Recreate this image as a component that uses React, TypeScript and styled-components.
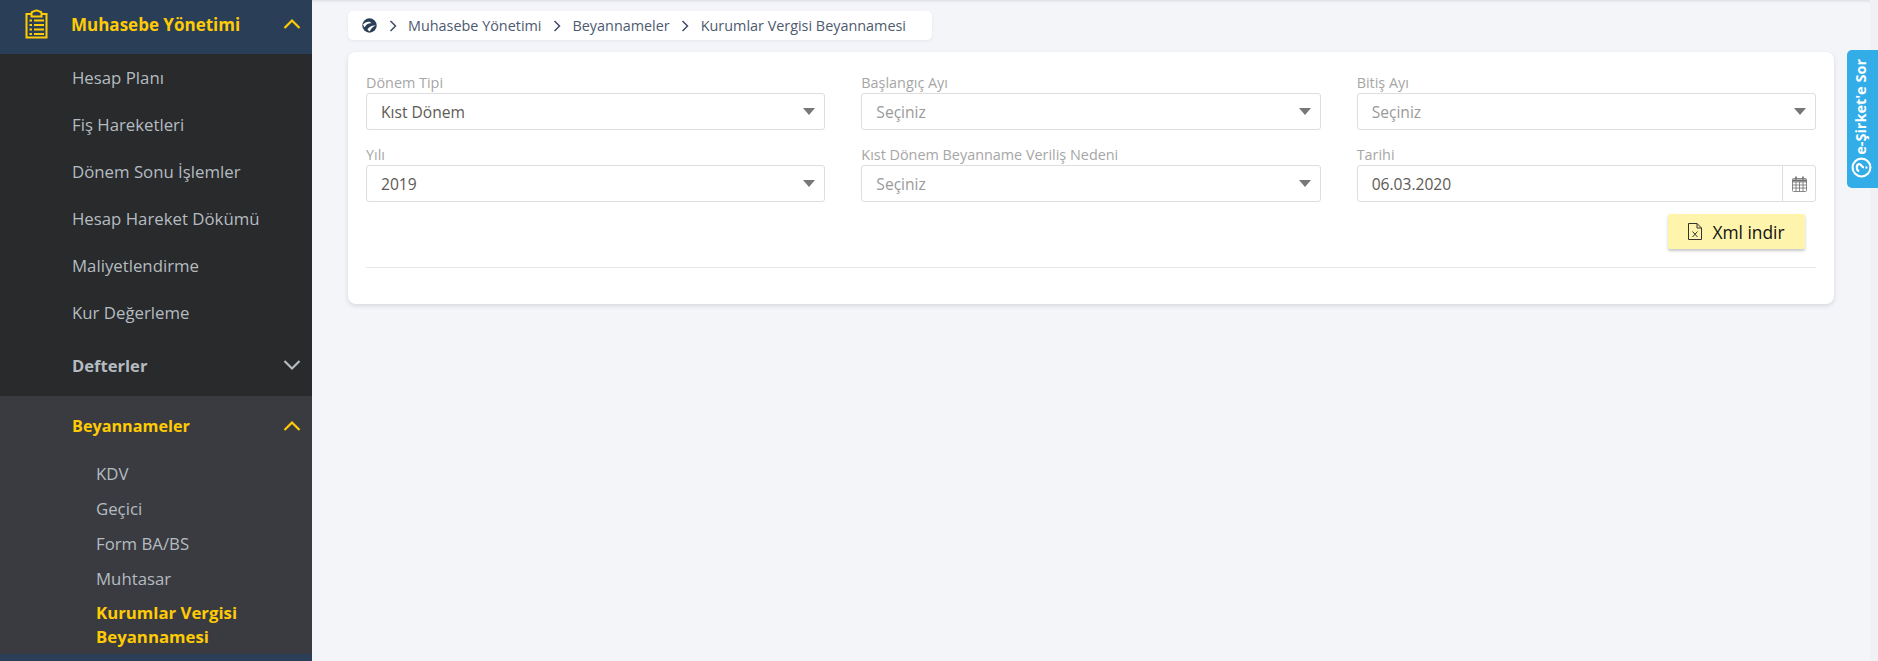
import styled, { createGlobalStyle } from 'styled-components'

const GlobalStyle = createGlobalStyle`
  html, body {
    margin: 0;
    height: 100%;
    overflow: hidden;
    background: #f3f5f9;
    font-family: 'Open Sans', 'Noto Sans', sans-serif;
  }
  * {
    box-sizing: border-box;
  }
`

const Page = styled.div`
  position: relative;
  display: flex;
  height: 661px;
  overflow: hidden;
`

const Sidebar = styled.nav`
  flex: 0 0 312px;
  display: flex;
  flex-direction: column;
  height: 661px;
  background: #292a2c;
`

const ActiveHeader = styled.div`
  flex: 0 0 54px;
  display: flex;
  align-items: center;
  justify-content: space-between;
  padding: 0 11px 6px 25px;
  background: #2a3f57;
`

const HeaderTitle = styled.div`
  display: flex;
  align-items: center;
  gap: 23px;
  font-size: 17px;
  font-weight: 700;
  color: #ffcb05;
`

const SubMenu = styled.div``

const MenuItem = styled.div`
  display: flex;
  align-items: center;
  height: 47px;
  padding-left: 72px;
  font-size: 16.8px;
  color: #b4bcc1;
`

const ClosedGroup = styled.div`
  flex: 0 0 60px;
  display: flex;
  align-items: center;
  justify-content: space-between;
  padding: 0 11px 2px 72px;
  font-size: 16.6px;
  font-weight: 700;
  color: #b4bcc1;
`

const OpenGroup = styled.div`
  flex: 0 0 258px;
  background: #3a3b40;
`

const OpenGroupTitle = styled.div`
  display: flex;
  align-items: center;
  justify-content: space-between;
  height: 60px;
  padding: 0 11px 0 72px;
  font-size: 16.2px;
  font-weight: 700;
  color: #ffcb05;
`

const NestedList = styled.div``

const NestedItem = styled.div<{ $active?: boolean }>`
  margin-top: ${(p) => (p.$active ? '5px' : 0)};
  padding: 0 40px 0 96px;
  font-size: 16.8px;
  line-height: ${(p) => (p.$active ? '24px' : '35px')};
  font-weight: ${(p) => (p.$active ? 700 : 400)};
  color: ${(p) => (p.$active ? '#ffcb05' : '#b4bcc1')};
`

const NavyFoot = styled.div`
  flex: 1;
  background: #2a3f57;
`

const Main = styled.main`
  flex: 1;
  min-width: 0;
  padding: 11px 44px 0 36px;
  box-shadow: inset 0 3px 3px -2px rgba(40, 50, 70, 0.14);
`

const Breadcrumb = styled.div`
  display: flex;
  align-items: center;
  gap: 11.5px;
  width: 584px;
  height: 29px;
  padding-left: 14px;
  background: #fff;
  border-radius: 5px;
  box-shadow: 0 1px 3px rgba(60, 70, 90, 0.08);
  font-size: 14.4px;
  color: #4d5a70;
`

const Crumb = styled.span`
  white-space: nowrap;
`

const Card = styled.section`
  height: 252px;
  margin-top: 12px;
  padding: 22px 18px 0;
  background: #fff;
  border-radius: 8px;
  box-shadow: 0 2px 4px rgba(60, 70, 90, 0.16);
`

const FormGrid = styled.div`
  display: grid;
  grid-template-columns: repeat(3, 1fr);
  column-gap: 36px;
  row-gap: 16px;
`

const Field = styled.div`
  min-width: 0;
`

const FieldLabel = styled.div`
  height: 19px;
  font-size: 14.4px;
  line-height: 18px;
  color: #a6a6a6;
`

const SelectBox = styled.div<{ $placeholder?: boolean }>`
  display: flex;
  align-items: center;
  justify-content: space-between;
  height: 37px;
  padding: 0 9px 0 14px;
  background: #fff;
  border: 1px solid #dedede;
  border-radius: 3px;
  font-size: 15.6px;
  color: ${(p) => (p.$placeholder ? '#9a9a9a' : '#5e5a56')};
`

const Caret = styled.span`
  width: 0;
  height: 0;
  border-left: 6.5px solid transparent;
  border-right: 6.5px solid transparent;
  border-top: 7px solid #777;
`

const DateBox = styled.div`
  display: flex;
  height: 37px;
  background: #fff;
  border: 1px solid #dedede;
  border-radius: 3px;
  font-size: 15.6px;
  color: #5e5a56;
`

const DateValue = styled.div`
  flex: 1;
  display: flex;
  align-items: center;
  padding-left: 14px;
`

const DateAddon = styled.div`
  flex: 0 0 33px;
  display: flex;
  align-items: center;
  justify-content: center;
  border-left: 1px solid #dedede;
`

const Actions = styled.div`
  display: flex;
  justify-content: flex-end;
  margin-top: 12px;
  padding-right: 11px;
`

const XmlButton = styled.button`
  display: flex;
  align-items: center;
  justify-content: center;
  gap: 10px;
  width: 137px;
  height: 35px;
  padding: 0;
  border: 0;
  border-radius: 2px;
  background: #fff4ab;
  box-shadow: 0 2px 3px rgba(0, 0, 0, 0.22);
  font-family: inherit;
  font-size: 17.4px;
  color: #111;
`

const Divider = styled.hr`
  margin: 18px 0 0;
  border: 0;
  border-top: 1px solid #e8e8e4;
`

const HelpTab = styled.div`
  position: absolute;
  top: 50px;
  right: 0;
  display: flex;
  flex-direction: column-reverse;
  align-items: center;
  gap: 2px;
  width: 31px;
  height: 138px;
  padding: 0 3px 10px 0;
  background: #33ade8;
  border-radius: 5px 0 0 5px;
  color: #fff;
`

const HelpText = styled.span`
  writing-mode: vertical-rl;
  transform: rotate(180deg);
  font-size: 14.5px;
  font-weight: 700;
  line-height: 16px;
  white-space: nowrap;
`

const ScrollTrack = styled.div`
  position: absolute;
  top: 0;
  right: 0;
  bottom: 0;
  width: 8px;
  background: #f0f1f3;
`

function Chevron({ up, color }: { up?: boolean; color: string }) {
  return (
    <svg width="18" height="12" viewBox="0 0 18 12" fill="none">
      <path
        d={up ? 'M1.5 10 L9 2.5 L16.5 10' : 'M1.5 2 L9 9.5 L16.5 2'}
        stroke={color}
        strokeWidth="2.2"
      />
    </svg>
  )
}

function CrumbArrow() {
  return (
    <svg width="8" height="12" viewBox="0 0 8 12" fill="none">
      <path d="M1.5 1 L6.5 6 L1.5 11" stroke="#3f4d63" strokeWidth="1.5" />
    </svg>
  )
}

function ClipboardIcon() {
  return (
    <svg width="23" height="30" viewBox="0 0 23 30" fill="none" stroke="#ffcb05" strokeWidth="2">
      <path d="M7 5 H1.5 V28.5 H21.5 V5 H16" />
      <path d="M6.5 7.5 V4.5 C6.5 3 7.5 2.5 8.5 2.5 C9.5 1 13.5 1 14.5 2.5 C15.5 2.5 16.5 3 16.5 4.5 V7.5 Z" />
      <path d="M4.5 11.5 H7 M9 11.5 H19 M4.5 16 H7 M9 16 H19 M4.5 20.5 H7 M9 20.5 H19 M4.5 25 H7 M9 25 H19" />
    </svg>
  )
}

function BrandIcon() {
  return (
    <svg width="15" height="15" viewBox="0 0 15 15">
      <circle cx="7.5" cy="7.5" r="7.2" fill="#2a3f57" />
      <path d="M1 6.5 C4 3 8 3 9.5 5.2 C7 4.8 4 6 2.4 9.6 Z" fill="#fff" />
      <path d="M5.4 11.5 C7.5 8 11 7 13.9 7.6 C11.5 8.4 9.2 10 7.6 13.6 Z" fill="#fff" />
    </svg>
  )
}

function CalendarIcon() {
  return (
    <svg width="15" height="16" viewBox="0 0 15 16" fill="none" stroke="#6c6c6c" strokeWidth="0.8">
      <rect x="0.5" y="2.5" width="14" height="13" rx="1" />
      <path d="M0.5 6 H14.5 M0.5 9 H14.5 M0.5 12 H14.5 M4 6 V15.5 M7.5 6 V15.5 M11 6 V15.5" />
      <path d="M4 0.5 V3.5 M11 0.5 V3.5" strokeWidth="1.6" />
      <path d="M0.5 4.5 H14.5" strokeWidth="2" />
    </svg>
  )
}

function XmlFileIcon() {
  return (
    <svg width="14" height="17" viewBox="0 0 14 17" fill="none" stroke="#333" strokeWidth="1">
      <path d="M0.5 0.5 H9 L13.5 5 V16.5 H0.5 Z" />
      <path d="M9 0.5 V5 H13.5" />
      <path d="M4.5 8.5 L9.5 14 M9.5 8.5 L4.5 14" />
    </svg>
  )
}

// the question mark lies on its side, like the label next to it
function HelpIcon() {
  return (
    <svg width="21" height="21" viewBox="0 0 20 20" fill="none" stroke="#fff">
      <circle cx="10" cy="10" r="8.5" strokeWidth="2" />
      <g transform="rotate(-90 10 10)" strokeWidth="2.1">
        <path d="M6.8 7.8 C6.8 4.8 13.2 4.8 13.2 8 C13.2 10 10 10 10 12.4" />
        <path d="M10 13.8 V15.6" />
      </g>
    </svg>
  )
}

const firstItems = [
  'Hesap Planı',
  'Fiş Hareketleri',
  'Dönem Sonu İşlemler',
  'Hesap Hareket Dökümü',
  'Maliyetlendirme',
  'Kur Değerleme',
]

const nestedItems = ['KDV', 'Geçici', 'Form BA/BS', 'Muhtasar']

export default function App() {
  return (
    <Page>
      <GlobalStyle />
      <Sidebar>
        <ActiveHeader>
          <HeaderTitle>
            <ClipboardIcon />
            Muhasebe Yönetimi
          </HeaderTitle>
          <Chevron up color="#ffcb05" />
        </ActiveHeader>
        <SubMenu>
          {firstItems.map((item) => (
            <MenuItem key={item}>{item}</MenuItem>
          ))}
        </SubMenu>
        <ClosedGroup>
          Defterler
          <Chevron color="#b4bcc1" />
        </ClosedGroup>
        <OpenGroup>
          <OpenGroupTitle>
            Beyannameler
            <Chevron up color="#ffcb05" />
          </OpenGroupTitle>
          <NestedList>
            {nestedItems.map((item) => (
              <NestedItem key={item}>{item}</NestedItem>
            ))}
            <NestedItem $active>Kurumlar Vergisi Beyannamesi</NestedItem>
          </NestedList>
        </OpenGroup>
        <NavyFoot />
      </Sidebar>

      <Main>
        <Breadcrumb>
          <BrandIcon />
          <CrumbArrow />
          <Crumb>Muhasebe Yönetimi</Crumb>
          <CrumbArrow />
          <Crumb>Beyannameler</Crumb>
          <CrumbArrow />
          <Crumb>Kurumlar Vergisi Beyannamesi</Crumb>
        </Breadcrumb>

        <Card>
          <FormGrid>
            <Field>
              <FieldLabel>Dönem Tipi</FieldLabel>
              <SelectBox>
                Kıst Dönem
                <Caret />
              </SelectBox>
            </Field>
            <Field>
              <FieldLabel>Başlangıç Ayı</FieldLabel>
              <SelectBox $placeholder>
                Seçiniz
                <Caret />
              </SelectBox>
            </Field>
            <Field>
              <FieldLabel>Bitiş Ayı</FieldLabel>
              <SelectBox $placeholder>
                Seçiniz
                <Caret />
              </SelectBox>
            </Field>
            <Field>
              <FieldLabel>Yılı</FieldLabel>
              <SelectBox>
                2019
                <Caret />
              </SelectBox>
            </Field>
            <Field>
              <FieldLabel>Kıst Dönem Beyanname Veriliş Nedeni</FieldLabel>
              <SelectBox $placeholder>
                Seçiniz
                <Caret />
              </SelectBox>
            </Field>
            <Field>
              <FieldLabel>Tarihi</FieldLabel>
              <DateBox>
                <DateValue>06.03.2020</DateValue>
                <DateAddon>
                  <CalendarIcon />
                </DateAddon>
              </DateBox>
            </Field>
          </FormGrid>
          <Actions>
            <XmlButton>
              <XmlFileIcon />
              Xml indir
            </XmlButton>
          </Actions>
          <Divider />
        </Card>
      </Main>

      <ScrollTrack />
      <HelpTab>
        <HelpIcon />
        <HelpText>e-Şirket'e Sor</HelpText>
      </HelpTab>
    </Page>
  )
}
